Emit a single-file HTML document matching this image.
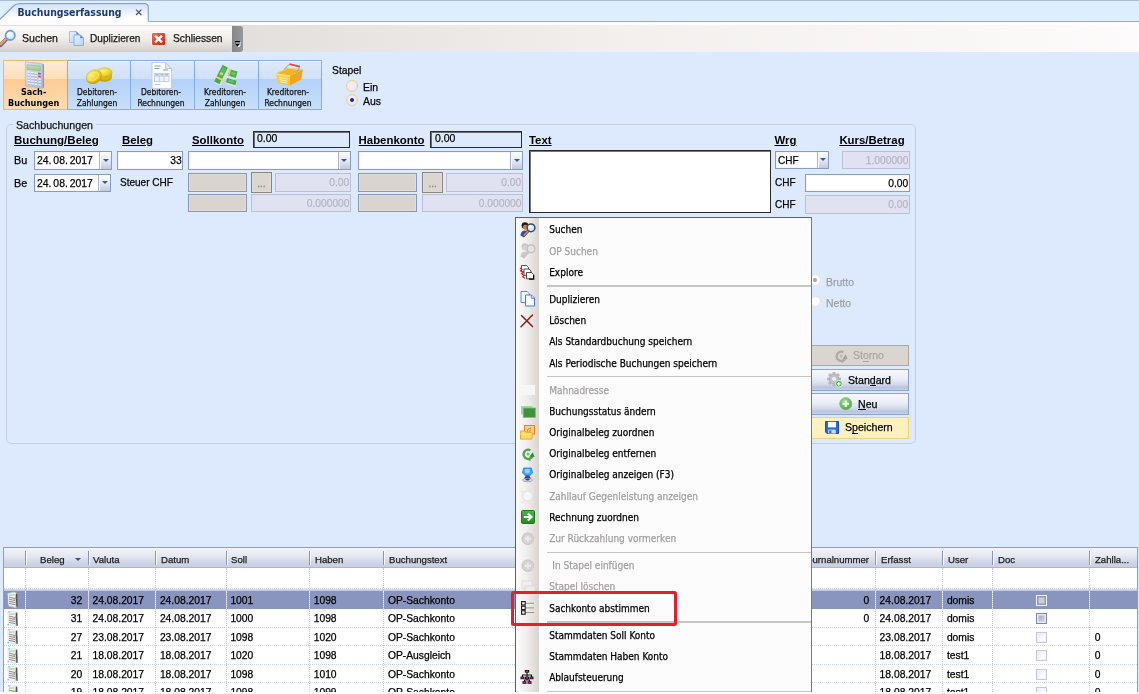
<!DOCTYPE html>
<html lang="de">
<head>
<meta charset="utf-8">
<title>Buchungserfassung</title>
<style>
html,body{margin:0;padding:0;overflow:hidden}
body{width:1139px;height:694px;overflow:hidden;position:relative;background:#ddeafe;font-family:"Liberation Sans",sans-serif;font-size:11px;color:#000}
#root{position:absolute;left:0;top:0;width:1139px;height:694px;will-change:transform}
.a{position:absolute;box-sizing:border-box;white-space:nowrap;-webkit-text-stroke:.25px}
svg.a{overflow:visible}
#tabstrip{left:0;top:0;width:1139px;height:22px;background:#ddeefe;border-top:1px solid #a9bdd8;border-bottom:1px solid #8eaad0}
#whiteline{left:0;top:22px;width:1139px;height:3px;background:#fdfdfe}
#tbrow{left:0;top:25px;width:1139px;height:27px;background:linear-gradient(90deg,#e3dfdc 240px,#f3f0ee 640px,#fdfbfb 1139px)}
#tb{left:0;top:26px;width:232px;height:26px;background:linear-gradient(#fbf9f8,#f3efed 45%,#e3dedb 75%,#d5cdc9);border-radius:0 0 3px 0}
#tbgrip{left:231.5px;top:26px;width:11.5px;height:26px;background:linear-gradient(90deg,#878787,#979797);border-radius:0 3px 3px 0}
.mb{top:60px;height:50px;border:1px solid #86acea;box-shadow:inset 0 1px 0 rgba(255,255,255,.65);background:linear-gradient(#dfeafb 0,#cfe0f9 37%,#b4d1f9 38%,#c9dffb 100%)}
.mb.sel{border-color:#f3b562;background:linear-gradient(#fdecd8 0,#fdddb6 37%,#fdcc93 38%,#fddcb1 100%)}
.in{background:#fff;border:1px solid #889bc2;box-shadow:inset 0 0 0 1px #f4f6fb}
.dis{background:#e0e1f1;border:1px solid #bbbfd3}
.gr{background:#d9d4cf;border:1px solid #8a98b8;box-shadow:inset 0 0 0 1px #e4dcd4}
.sunk{background:#ddeafe;border:1px solid #2b2b2b;box-shadow:inset 1px 1px 0 #6e6e6e}
.dd{background:linear-gradient(#fcfdff,#e3e7f3 55%,#c3c9dc);border-left:1px solid #aab6d0;box-shadow:inset 1px 0 0 #f6f8fc}
.dd:after{content:"";position:absolute;left:50%;top:50%;margin:-2px 0 0 -3px;border:3px solid transparent;border-top:3.5px solid #3b5690;border-bottom:0}
.btn{border:1px solid #89a3d6;background:linear-gradient(#f6f7fc 0,#eceff8 40%,#d6dced 70%,#b9c3db 88%,#c9d1e4 100%)}
.rad{width:12px;height:12px;border-radius:50%;border:1.3px solid #f0cb8c;background:radial-gradient(circle at 40% 40%,#f3f1f7,#e7e4ef)}
.rad.on:after{content:"";position:absolute;left:2.7px;top:2.7px;width:4.2px;height:4.2px;border-radius:50%;background:#19277c}
.radd{border-radius:50%;border:1.2px solid #e6dfd6;background:#fdfcfc}
.radd.on:after{content:"";position:absolute;left:2.4px;top:3px;width:4.4px;height:4.4px;border-radius:50%;background:#a3a3a6}
#menu{left:515.4px;top:217px;width:296.6px;height:490px;background:#fdfcfc;border:1px solid #5f5f5f;border-right-color:#7a7a7a}
#mstrip{left:515.8px;top:218px;width:23.5px;height:480px;background:linear-gradient(90deg,#fcfbfb 0,#f1efed 45%,#d8d4d0 100%)}
.msep{left:547px;width:264px;height:1.3px;background:#c6c4c3}
#grid{left:3px;top:547px;width:1135px;height:150px;background:#fff;border:1px solid #8e9ec0}
#gh{left:4px;top:548px;width:1133px;height:19.5px;background:linear-gradient(#f3f4fa 0,#e6e9f3 40%,#d0d6e7 75%,#c8cfe2 100%);border-bottom:1px solid #adb6cf}
.ghs{top:551px;width:1px;height:14px;background:#8a95b2;box-shadow:1px 0 0 #fbfbfd}
.grow{left:4px;width:1133px;height:1px;border-top:1px dotted #cdd1dc}
.gv{top:568px;width:0;height:130px;border-left:1px dotted #c5c9d6}
.gvs{width:0;height:18px;border-left:1px dotted #e6e9f2}
.cb{width:11px;height:11px}
</style>
</head>
<body>
<div id="root">
<!-- TAB STRIP -->
<div class="a" id="tabstrip"></div>
<svg class="a" style="left:0;top:0" width="160" height="23" viewBox="0 0 160 23">
<defs><linearGradient id="tg" x1="0" y1="0" x2="0" y2="1"><stop offset=".15" stop-color="#d9e6fa"/><stop offset=".75" stop-color="#ffffff"/></linearGradient></defs>
<path d="M-2 23 L-2 21.3 L13.2 6.2 Q15.8 3.6 20 3.6 L144.5 3.6 Q148.3 3.6 148.3 7.5 L148.3 23 Z" fill="url(#tg)"/>
<path d="M-2 21.3 L13.2 6.2 Q15.8 3.6 20 3.6 L144.5 3.6 Q148.3 3.6 148.3 7.5 L148.3 21.8" fill="none" stroke="#86a3cd" stroke-width="1.2"/>
<path d="M136 9.6 l5.4 5.4 m0 -5.4 l-5.4 5.4" stroke="#4c4c4c" stroke-width="1.1" fill="none"/>
</svg>
<div class="a" style="top:4.95px;line-height:14px;font-size:10.4px;font-family:'DejaVu Sans Condensed','Liberation Sans',sans-serif;color:#1b3a70;font-weight:bold;-webkit-text-stroke:0;left:17.5px;">Buchungserfassung</div>
<div class="a" id="whiteline"></div>
<!-- TOOLBAR -->
<div class="a" id="tbrow"></div><div class="a" id="tb"></div><div class="a" id="tbgrip"></div>
<svg class="a" style="left:-0.3px;top:29.8px" width="16" height="17" viewBox="0 0 16 17"><defs><radialGradient id="lens" cx=".4" cy=".35" r=".7"><stop offset="0" stop-color="#fff"/><stop offset=".6" stop-color="#d4f0fb"/><stop offset="1" stop-color="#a8d4f4"/></radialGradient></defs><path d="M6.4 9.0 L0.6 15.2" stroke="#5a6894" stroke-width="4" stroke-linecap="round"/><path d="M6.2 8.6 L0.8 14.2" stroke="#eda04a" stroke-width="2.4" stroke-linecap="round"/><circle cx="10.2" cy="5.4" r="4.7" fill="url(#lens)" stroke="#7797d6" stroke-width="1.7"/></svg>
<div class="a" style="top:30.90px;line-height:15px;font-size:11.4px;color:#151515;left:21.9px;transform:scaleX(0.93);transform-origin:0 0;">Suchen</div>
<svg class="a" style="left:68.5px;top:31px" width="15" height="15" viewBox="0 0 15 15"><defs><linearGradient id="tbg" x1="0" y1="0" x2="1" y2="1"><stop offset="0" stop-color="#eaf3fe"/><stop offset="1" stop-color="#b5d2f8"/></linearGradient></defs><path d="M.5 .5 H7.5 L10.5 3.5 V11.5 H.5 Z" fill="url(#tbg)" stroke="#9dc0f1" stroke-width="1"/><path d="M7.3 .5 L10.5 3.7 H7.3 Z" fill="#5f8de0"/><path d="M5 4 H11.5 L14.5 7 V14.5 H5 Z" fill="url(#tbg)" stroke="#86b0ee" stroke-width="1"/><path d="M11.3 4 L14.5 7.2 H11.3 Z" fill="#4f80dc"/></svg>
<div class="a" style="top:30.90px;line-height:15px;font-size:11.4px;color:#151515;left:90.4px;transform:scaleX(0.885);transform-origin:0 0;">Duplizieren</div>
<svg class="a" style="left:151px;top:31.5px" width="15" height="14" viewBox="0 0 15 14"><defs><linearGradient id="rx" x1="0" y1="0" x2="1" y2="1"><stop offset="0" stop-color="#f4694a"/><stop offset="1" stop-color="#d3230f"/></linearGradient></defs><rect x=".2" y=".2" width="14.6" height="13.6" rx="1.5" fill="#fff" opacity=".8"/><rect x="1" y="1" width="13" height="12" rx="1" fill="url(#rx)"/><path d="M4 3.6 L11 10.4 M11 3.6 L4 10.4" stroke="#fff" stroke-width="2.3" stroke-linecap="butt"/></svg>
<div class="a" style="top:30.90px;line-height:15px;font-size:11.4px;color:#151515;left:173px;transform:scaleX(0.9);transform-origin:0 0;">Schliessen</div>
<svg class="a" style="left:234.6px;top:41.3px" width="8" height="7" viewBox="0 0 8 7"><rect x="1" y="1.4" width="5" height="1" fill="#fff"/><rect x="0" y="0" width="5" height="1.3" fill="#000"/><path d="M1.2 3.6 H6.2 L3.7 6.6 Z" fill="#fff"/><path d="M0 2.8 H5 L2.5 5.6 Z" fill="#000"/></svg>
<!-- MODE BUTTONS -->
<div class="a mb sel" style="left:3px;top:60px;width:64.7px;height:50px;"></div>
<div class="a" style="top:85.84px;line-height:12px;font-size:9px;font-family:'DejaVu Sans Condensed','Liberation Sans',sans-serif;font-weight:bold;-webkit-text-stroke:0;left:-116.35px;width:300px;text-align:center;">Sach-</div>
<div class="a" style="top:96.84px;line-height:12px;font-size:9px;font-family:'DejaVu Sans Condensed','Liberation Sans',sans-serif;font-weight:bold;-webkit-text-stroke:0;left:-116.35px;width:300px;text-align:center;">Buchungen</div>
<div class="a mb" style="left:66.7px;top:60px;width:64.6px;height:50px;"></div>
<div class="a" style="top:85.84px;line-height:12px;font-size:9px;font-family:'DejaVu Sans Condensed','Liberation Sans',sans-serif;color:#111;left:-52.7px;width:300px;text-align:center;transform:scaleX(0.935);transform-origin:50% 0;">Debitoren-</div>
<div class="a" style="top:96.84px;line-height:12px;font-size:9px;font-family:'DejaVu Sans Condensed','Liberation Sans',sans-serif;color:#111;left:-52.7px;width:300px;text-align:center;transform:scaleX(0.935);transform-origin:50% 0;">Zahlungen</div>
<div class="a mb" style="left:130.3px;top:60px;width:64.7px;height:50px;"></div>
<div class="a" style="top:85.84px;line-height:12px;font-size:9px;font-family:'DejaVu Sans Condensed','Liberation Sans',sans-serif;color:#111;left:10.950000000000017px;width:300px;text-align:center;transform:scaleX(0.935);transform-origin:50% 0;">Debitoren-</div>
<div class="a" style="top:96.84px;line-height:12px;font-size:9px;font-family:'DejaVu Sans Condensed','Liberation Sans',sans-serif;color:#111;left:10.950000000000017px;width:300px;text-align:center;transform:scaleX(0.935);transform-origin:50% 0;">Rechnungen</div>
<div class="a mb" style="left:194px;top:60px;width:64.7px;height:50px;"></div>
<div class="a" style="top:85.84px;line-height:12px;font-size:9px;font-family:'DejaVu Sans Condensed','Liberation Sans',sans-serif;color:#111;left:74.65px;width:300px;text-align:center;transform:scaleX(0.935);transform-origin:50% 0;">Kreditoren-</div>
<div class="a" style="top:96.84px;line-height:12px;font-size:9px;font-family:'DejaVu Sans Condensed','Liberation Sans',sans-serif;color:#111;left:74.65px;width:300px;text-align:center;transform:scaleX(0.935);transform-origin:50% 0;">Zahlungen</div>
<div class="a mb" style="left:257.7px;top:60px;width:64.1px;height:50px;"></div>
<div class="a" style="top:85.84px;line-height:12px;font-size:9px;font-family:'DejaVu Sans Condensed','Liberation Sans',sans-serif;color:#111;left:138.05px;width:300px;text-align:center;transform:scaleX(0.935);transform-origin:50% 0;">Kreditoren-</div>
<div class="a" style="top:96.84px;line-height:12px;font-size:9px;font-family:'DejaVu Sans Condensed','Liberation Sans',sans-serif;color:#111;left:138.05px;width:300px;text-align:center;transform:scaleX(0.935);transform-origin:50% 0;">Rechnungen</div>
<svg class="a" style="left:24.8px;top:61px" width="20" height="28" viewBox="0 0 20 28"><defs><linearGradient id="cb" x1="0" y1="0" x2="1" y2="1"><stop offset="0" stop-color="#dbe4f1"/><stop offset="1" stop-color="#aebdd6"/></linearGradient><linearGradient id="cd" x1="0" y1="0" x2="0" y2="1"><stop offset="0" stop-color="#c3e2ab"/><stop offset="1" stop-color="#9fc886"/></linearGradient></defs><path d="M17.3 2.7 L19 3.5 V26.5 L17.3 27.4 Z" fill="#8798b6"/><path d="M0.3 0.7 L17.3 2.7 V27.4 L0.5 25 Z" fill="url(#cb)" stroke="#a9b8d0" stroke-width=".7"/><path d="M2 3.7 L15.3 5.2 V9.8 L2 8.5 Z" fill="url(#cd)" stroke="#8fae80" stroke-width=".5"/><path d="M2.60 10.50 l2.5 .3 v1.5 l-2.5 -.3 Z" fill="#f7f9fc"/><path d="M2.60 12.00 l2.5 .3" stroke="#8d9bb4" stroke-width=".6"/><path d="M6.15 10.92 l2.5 .3 v1.5 l-2.5 -.3 Z" fill="#f7f9fc"/><path d="M6.15 12.42 l2.5 .3" stroke="#8d9bb4" stroke-width=".6"/><path d="M9.70 11.34 l2.5 .3 v1.5 l-2.5 -.3 Z" fill="#f7f9fc"/><path d="M9.70 12.84 l2.5 .3" stroke="#8d9bb4" stroke-width=".6"/><path d="M13.25 11.76 l2.5 .3 v1.5 l-2.5 -.3 Z" fill="#5b6476"/><path d="M2.60 13.35 l2.5 .3 v1.5 l-2.5 -.3 Z" fill="#f7f9fc"/><path d="M2.60 14.85 l2.5 .3" stroke="#8d9bb4" stroke-width=".6"/><path d="M6.15 13.77 l2.5 .3 v1.5 l-2.5 -.3 Z" fill="#f7f9fc"/><path d="M6.15 15.27 l2.5 .3" stroke="#8d9bb4" stroke-width=".6"/><path d="M9.70 14.19 l2.5 .3 v1.5 l-2.5 -.3 Z" fill="#f7f9fc"/><path d="M9.70 15.69 l2.5 .3" stroke="#8d9bb4" stroke-width=".6"/><path d="M13.25 14.61 l2.5 .3 v1.5 l-2.5 -.3 Z" fill="#e2434c"/><path d="M2.60 16.20 l2.5 .3 v1.5 l-2.5 -.3 Z" fill="#f7f9fc"/><path d="M2.60 17.70 l2.5 .3" stroke="#8d9bb4" stroke-width=".6"/><path d="M6.15 16.62 l2.5 .3 v1.5 l-2.5 -.3 Z" fill="#f7f9fc"/><path d="M6.15 18.12 l2.5 .3" stroke="#8d9bb4" stroke-width=".6"/><path d="M9.70 17.04 l2.5 .3 v1.5 l-2.5 -.3 Z" fill="#f7f9fc"/><path d="M9.70 18.54 l2.5 .3" stroke="#8d9bb4" stroke-width=".6"/><path d="M13.25 17.46 l2.5 .3 v1.5 l-2.5 -.3 Z" fill="#f7f9fc"/><path d="M13.25 18.96 l2.5 .3" stroke="#8d9bb4" stroke-width=".6"/><path d="M2.60 19.05 l2.5 .3 v1.5 l-2.5 -.3 Z" fill="#f7f9fc"/><path d="M2.60 20.55 l2.5 .3" stroke="#8d9bb4" stroke-width=".6"/><path d="M6.15 19.47 l2.5 .3 v1.5 l-2.5 -.3 Z" fill="#f7f9fc"/><path d="M6.15 20.97 l2.5 .3" stroke="#8d9bb4" stroke-width=".6"/><path d="M9.70 19.89 l2.5 .3 v1.5 l-2.5 -.3 Z" fill="#f7f9fc"/><path d="M9.70 21.39 l2.5 .3" stroke="#8d9bb4" stroke-width=".6"/><path d="M13.25 20.31 l2.5 .3 v1.5 l-2.5 -.3 Z" fill="#f7f9fc"/><path d="M13.25 21.81 l2.5 .3" stroke="#8d9bb4" stroke-width=".6"/><path d="M2.60 21.90 l2.5 .3 v1.5 l-2.5 -.3 Z" fill="#f7f9fc"/><path d="M2.60 23.40 l2.5 .3" stroke="#8d9bb4" stroke-width=".6"/><path d="M6.15 22.32 l2.5 .3 v1.5 l-2.5 -.3 Z" fill="#f7f9fc"/><path d="M6.15 23.82 l2.5 .3" stroke="#8d9bb4" stroke-width=".6"/><path d="M9.70 22.74 l2.5 .3 v1.5 l-2.5 -.3 Z" fill="#f7f9fc"/><path d="M9.70 24.24 l2.5 .3" stroke="#8d9bb4" stroke-width=".6"/><path d="M13.25 23.16 l2.5 .3 v1.5 l-2.5 -.3 Z" fill="#f7f9fc"/><path d="M13.25 24.66 l2.5 .3" stroke="#8d9bb4" stroke-width=".6"/></svg>
<svg class="a" style="left:85.5px;top:66.5px" width="27" height="17" viewBox="0 0 27 17"><defs><radialGradient id="cg" cx=".4" cy=".3" r=".8"><stop offset="0" stop-color="#fbf08a"/><stop offset=".6" stop-color="#efd127"/><stop offset="1" stop-color="#c9a508"/></radialGradient></defs><ellipse cx="18.5" cy="10" rx="7.6" ry="4.8" fill="#caa70a"/><ellipse cx="18.5" cy="8" rx="7.6" ry="4.8" fill="#d9b615"/><ellipse cx="18.5" cy="5.6" rx="7.6" ry="4.8" fill="url(#cg)" stroke="#d2b010" stroke-width=".5"/><ellipse cx="8" cy="10.6" rx="8" ry="6" fill="#c9a508" transform="rotate(-28 8 10.6)"/><ellipse cx="7.7" cy="9.3" rx="8" ry="6" fill="url(#cg)" stroke="#d2b010" stroke-width=".5" transform="rotate(-28 7.7 9.3)"/><ellipse cx="7.7" cy="9.3" rx="5.2" ry="3.6" fill="none" stroke="#f9ec7a" stroke-width=".8" transform="rotate(-28 7.7 9.3)"/></svg>
<svg class="a" style="left:150.7px;top:61.5px" width="21" height="27" viewBox="0 0 21 27"><path d="M1 .5 H14.5 L20.5 6.5 V26.5 H1 Z" fill="#fbfcfe" stroke="#c3cddd" stroke-width="1"/><path d="M14.5 .5 V6.5 H20.5 Z" fill="#dfe5ee" stroke="#b9c3d3" stroke-width=".8"/><path d="M3.5 4 h6 M3.5 6.5 h5 M12 8 h5" stroke="#8d9ab0" stroke-width="1"/><rect x="3.5" y="11.5" width="14.5" height="8" fill="#eef4fc" stroke="#b6c8e4" stroke-width=".8"/><path d="M3.5 14.2 h14.5 M8.3 11.5 v8 M13 11.5 v8" stroke="#b6c8e4" stroke-width=".8"/><path d="M4.5 12.8 h3 M9.3 12.8 h3 M14 12.8 h3" stroke="#7e93b8" stroke-width=".9"/><path d="M3.5 22.5 h6" stroke="#c4cddb" stroke-width="1"/></svg>
<svg class="a" style="left:213px;top:63px" width="26" height="24" viewBox="0 0 26 24"><g transform="translate(19.9 11.2) rotate(17)"><rect x="-4.6" y="-3.9" width="9.2" height="7.8" fill="#e3e3e3"/><rect x="-4.6" y="-3.9" width="8.4" height="6.6" fill="#4cae55"/><rect x="-4.6" y="-3.9" width="1.6" height="6.6" fill="#e9cf55"/><rect x="-1.8" y="-2" width="4" height="2.6" fill="#6cc172"/></g><g transform="translate(18.3 19.2) rotate(17)"><rect x="-5.2" y="-2.9" width="10.6" height="6.4" fill="#e1e1e1"/><rect x="-5.2" y="-2.9" width="10" height="4.6" fill="#49aa52"/><rect x="-3" y="-1.8" width="5" height="2" fill="#6abf70"/></g><g transform="translate(8.2 11.9) rotate(27.5)"><rect x="-3.6" y="-9.8" width="8.4" height="19.9" fill="#dcdcdc"/><rect x="-3.6" y="-9.8" width="6.6" height="19.2" fill="#47a951" stroke="#e9f3e9" stroke-width=".5"/><rect x="-2.2" y="-7.8" width="3.8" height="9.2" fill="#5fb966"/><ellipse cx="-.3" cy="-1.2" rx="1.7" ry="1.3" fill="#c7e06a"/><rect x="-3.8" y="3" width="8.6" height="1.9" fill="#ecd45c"/></g></svg>
<svg class="a" style="left:275px;top:63px" width="29" height="23" viewBox="0 0 29 23"><defs><linearGradient id="bk" x1="0" y1="0" x2="0" y2="1"><stop offset="0" stop-color="#fbd44a"/><stop offset="1" stop-color="#f6bf2a"/></linearGradient></defs><path d="M.8 10.7 L12.6 5.3 L27.8 6.8 L15 13.1 Z" fill="#f3b22a" stroke="#f9cf4e" stroke-width="1"/><path d="M15 13.1 L27.8 6.8 L26.3 16.6 L14.6 22.5 Z" fill="#efa51c"/><path d="M.8 10.7 L15 13.1 L14.6 22.5 L3.3 20 Z" fill="url(#bk)"/><path d="M.8 10.9 L15 13.3" stroke="#fde27e" stroke-width="1.5"/><path d="M4 14.4 L12.4 16 M4.4 16.6 L12.4 18.2 M4.8 18.6 L12.4 20.2" stroke="#fde9a0" stroke-width="1.1"/><path d="M9.2 6.3 L14.6 1.1 M24.9 3.6 L21.4 9.9" fill="none" stroke="#a9adb8" stroke-width="1.1"/><path d="M14.6 1.1 L24.9 3.6" stroke="#e1454d" stroke-width="1.7"/></svg>
<div class="a" style="top:62.70px;line-height:15px;font-size:11.4px;left:332.1px;transform:scaleX(0.905);transform-origin:0 0;">Stapel</div>
<div class="a rad" style="left:346px;top:79.6px;width:12px;height:12px;"></div>
<div class="a" style="top:80.20px;line-height:15px;font-size:11.4px;left:363px;transform:scaleX(0.92);transform-origin:0 0;">Ein</div>
<div class="a rad on" style="left:346px;top:94.3px;width:12px;height:12px;"></div>
<div class="a" style="top:94.20px;line-height:15px;font-size:11.4px;left:362.5px;transform:scaleX(0.92);transform-origin:0 0;">Aus</div>
<!-- FORM -->
<div class="a" style="left:6px;top:124px;width:910.4px;height:319.6px;border:1px solid #c3ccdb;border-radius:5px"></div>
<div class="a" style="left:13px;top:119px;width:83px;height:12px;background:#ddeafe"></div>
<div class="a" style="top:117.60px;line-height:15px;font-size:11.4px;color:#111;left:16px;transform:scaleX(0.935);transform-origin:0 0;">Sachbuchungen</div>
<div class="a" style="top:132.90px;line-height:15px;font-size:11.4px;font-weight:bold;-webkit-text-stroke:0;text-decoration:underline;left:14.3px;transform:scaleX(1.015);transform-origin:0 0;">Buchung/Beleg</div>
<div class="a" style="top:132.90px;line-height:15px;font-size:11.4px;font-weight:bold;-webkit-text-stroke:0;text-decoration:underline;left:122px;">Beleg</div>
<div class="a" style="top:132.90px;line-height:15px;font-size:11.4px;font-weight:bold;-webkit-text-stroke:0;text-decoration:underline;left:192px;">Sollkonto</div>
<div class="a" style="top:132.90px;line-height:15px;font-size:11.4px;font-weight:bold;-webkit-text-stroke:0;text-decoration:underline;left:358.6px;">Habenkonto</div>
<div class="a" style="top:132.90px;line-height:15px;font-size:11.4px;font-weight:bold;-webkit-text-stroke:0;text-decoration:underline;left:529px;">Text</div>
<div class="a" style="top:132.90px;line-height:15px;font-size:11.4px;font-weight:bold;-webkit-text-stroke:0;text-decoration:underline;left:774.5px;">Wrg</div>
<div class="a" style="top:132.90px;line-height:15px;font-size:11.4px;font-weight:bold;-webkit-text-stroke:0;text-decoration:underline;left:839.4px;">Kurs/Betrag</div>
<div class="a sunk" style="left:252.7px;top:131px;width:97.3px;height:17.4px;"></div>
<div class="a" style="top:130.80px;line-height:15px;font-size:11.4px;left:257.2px;transform:scaleX(0.92);transform-origin:0 0;">0.00</div>
<div class="a sunk" style="left:430.3px;top:131px;width:92.1px;height:17.4px;"></div>
<div class="a" style="top:130.80px;line-height:15px;font-size:11.4px;left:434.8px;transform:scaleX(0.92);transform-origin:0 0;">0.00</div>
<div class="a" style="top:153.40px;line-height:15px;font-size:11.4px;left:14px;transform:scaleX(0.95);transform-origin:0 0;">Bu</div>
<div class="a" style="top:175.50px;line-height:15px;font-size:11.4px;left:14px;transform:scaleX(0.95);transform-origin:0 0;">Be</div>
<div class="a in" style="left:34px;top:151.3px;width:78px;height:19.2px;"></div><div class="a dd" style="left:99px;top:152.3px;width:12px;height:17.2px;"></div><div class="a" style="top:153.40px;line-height:15px;font-size:11.4px;left:36.8px;transform:scaleX(0.913);transform-origin:0 0;word-spacing:-1.1px;">24. 08. 2017</div>
<div class="a in" style="left:34px;top:174px;width:77px;height:18.4px;"></div><div class="a dd" style="left:98px;top:175px;width:12px;height:16.4px;"></div><div class="a" style="top:175.50px;line-height:15px;font-size:11.4px;left:36.8px;transform:scaleX(0.913);transform-origin:0 0;word-spacing:-1.1px;">24. 08. 2017</div>
<div class="a in" style="left:116.8px;top:151.3px;width:66.2px;height:19.2px;"></div>
<div class="a" style="top:153.40px;line-height:15px;font-size:11.4px;right:957.5px;transform:scaleX(0.9);transform-origin:100% 0;">33</div>
<div class="a" style="top:174.90px;line-height:15px;font-size:11.4px;left:120px;transform:scaleX(0.88);transform-origin:0 0;">Steuer CHF</div>
<div class="a in" style="left:188px;top:151.3px;width:163px;height:19.2px;"></div><div class="a dd" style="left:337.5px;top:152.3px;width:12.5px;height:17.2px;"></div>
<div class="a in" style="left:358.3px;top:151.3px;width:165px;height:19.2px;"></div><div class="a dd" style="left:509.79999999999995px;top:152.3px;width:12.5px;height:17.2px;"></div>
<div class="a gr" style="left:188.1px;top:173px;width:58.6px;height:18.6px;"></div><div class="a gr" style="left:251px;top:172.2px;width:21px;height:20.6px;border-color:#8b847d;background:#dcd6d0"></div><div class="a" style="top:177.09px;line-height:13px;font-size:10px;color:#8d8984;left:111.30000000000001px;width:300px;text-align:center;">...</div><div class="a dis" style="left:274.8px;top:173.2px;width:76px;height:18.4px;"></div><div class="a" style="top:174.60px;line-height:15px;font-size:11.4px;color:#b3b6c4;right:789.7px;transform:scaleX(0.9);transform-origin:100% 0;">0.00</div><div class="a gr" style="left:188.1px;top:194.1px;width:58.6px;height:18.3px;"></div><div class="a dis" style="left:251px;top:194.2px;width:99.8px;height:18.2px;"></div><div class="a" style="top:195.90px;line-height:15px;font-size:11.4px;color:#b3b6c4;right:789.7px;transform:scaleX(0.9);transform-origin:100% 0;">0.000000</div>
<div class="a gr" style="left:358.2px;top:173px;width:58.6px;height:18.6px;"></div><div class="a gr" style="left:422.4px;top:172.2px;width:21px;height:20.6px;border-color:#8b847d;background:#dcd6d0"></div><div class="a" style="top:177.09px;line-height:13px;font-size:10px;color:#8d8984;left:282.7px;width:300px;text-align:center;">...</div><div class="a dis" style="left:446.2px;top:173.2px;width:76.4px;height:18.4px;"></div><div class="a" style="top:174.60px;line-height:15px;font-size:11.4px;color:#b3b6c4;right:617.9px;transform:scaleX(0.9);transform-origin:100% 0;">0.00</div><div class="a gr" style="left:358.2px;top:194.1px;width:58.6px;height:18.3px;"></div><div class="a dis" style="left:422.4px;top:194.2px;width:100.2px;height:18.2px;"></div><div class="a" style="top:195.90px;line-height:15px;font-size:11.4px;color:#b3b6c4;right:617.9px;transform:scaleX(0.9);transform-origin:100% 0;">0.000000</div>
<div class="a" style="left:528.6px;top:150.3px;width:242.4px;height:63px;background:#fff;border:1px solid #2a2a2a;box-shadow:inset 1px 1px 0 #777"></div>
<div class="a in" style="left:774.5px;top:150.6px;width:54.5px;height:18.8px;"></div><div class="a dd" style="left:816.5px;top:151.6px;width:11.5px;height:16.8px;"></div>
<div class="a" style="top:152.50px;line-height:15px;font-size:11.4px;left:778px;transform:scaleX(0.88);transform-origin:0 0;">CHF</div>
<div class="a dis" style="left:842px;top:150.6px;width:68.3px;height:18.8px;"></div>
<div class="a" style="top:152.50px;line-height:15px;font-size:11.4px;color:#b3b6c4;right:230.5px;transform:scaleX(0.9);transform-origin:100% 0;">1.000000</div>
<div class="a" style="top:175.30px;line-height:15px;font-size:11.4px;left:775px;transform:scaleX(0.88);transform-origin:0 0;">CHF</div>
<div class="a in" style="left:805.3px;top:174.3px;width:105px;height:18.2px;"></div>
<div class="a" style="top:175.50px;line-height:15px;font-size:11.4px;right:230.5px;transform:scaleX(0.9);transform-origin:100% 0;">0.00</div>
<div class="a" style="top:196.60px;line-height:15px;font-size:11.4px;left:775px;transform:scaleX(0.88);transform-origin:0 0;">CHF</div>
<div class="a dis" style="left:805.3px;top:195.4px;width:105px;height:18.6px;"></div>
<div class="a" style="top:196.60px;line-height:15px;font-size:11.4px;color:#b3b6c4;right:230.5px;transform:scaleX(0.9);transform-origin:100% 0;">0.00</div>
<div class="a radd on" style="left:809.5px;top:274px;width:11.5px;height:11.5px;"></div>
<div class="a" style="top:274.70px;line-height:15px;font-size:11.4px;color:#9c9eaa;left:826px;transform:scaleX(0.92);transform-origin:0 0;">Brutto</div>
<div class="a radd" style="left:809.5px;top:295.5px;width:11.5px;height:11.5px;"></div>
<div class="a" style="top:295.70px;line-height:15px;font-size:11.4px;color:#9c9eaa;left:826px;transform:scaleX(0.92);transform-origin:0 0;">Netto</div>
<div class="a btn" style="left:805.5px;top:344.6px;width:103.8px;height:21.6px;background:#dad6cf;border-color:#aca8a0"></div>
<svg class="a" style="left:834.3px;top:349px" width="14" height="14" viewBox="0 0 14 14"><path d="M11.2 9.6 A4.6 4.6 0 1 1 9.4 3.2" fill="none" stroke="#aeaba6" stroke-width="2.4"/><path d="M11.8 5.2 L13.6 10 L8.4 9.8 Z" fill="#a5a29d"/><path d="M5.2 12.4 L9.2 10.6 L9.6 14 Z" fill="#aeaba6"/><circle cx="7" cy="7" r="1.5" fill="#aeaba6" opacity=".7"/></svg>
<div class="a" style="top:348.40px;line-height:15px;font-size:11.4px;color:#a9a6a1;left:853.4px;transform:scaleX(0.92);transform-origin:0 0;">Storno</div>
<div class="a btn" style="left:805.5px;top:368.8px;width:103.8px;height:21.9px;"></div>
<svg class="a" style="left:827.3px;top:371.5px" width="16" height="16" viewBox="0 0 16 16"><rect x="-1.5" y="-7" width="3" height="3.2" fill="#b9b9b9" transform="translate(7 7) rotate(0)"/><rect x="-1.5" y="-7" width="3" height="3.2" fill="#b9b9b9" transform="translate(7 7) rotate(45)"/><rect x="-1.5" y="-7" width="3" height="3.2" fill="#b9b9b9" transform="translate(7 7) rotate(90)"/><rect x="-1.5" y="-7" width="3" height="3.2" fill="#b9b9b9" transform="translate(7 7) rotate(135)"/><rect x="-1.5" y="-7" width="3" height="3.2" fill="#b9b9b9" transform="translate(7 7) rotate(180)"/><rect x="-1.5" y="-7" width="3" height="3.2" fill="#b9b9b9" transform="translate(7 7) rotate(225)"/><rect x="-1.5" y="-7" width="3" height="3.2" fill="#b9b9b9" transform="translate(7 7) rotate(270)"/><rect x="-1.5" y="-7" width="3" height="3.2" fill="#b9b9b9" transform="translate(7 7) rotate(315)"/><circle cx="7" cy="7" r="4.8" fill="#c4c4c4" stroke="#a9a9a9" stroke-width=".8"/><circle cx="7" cy="7" r="2" fill="#eef0f6"/><circle cx="11.8" cy="11.8" r="3.3" fill="#3fb140" stroke="#e9f6e9" stroke-width=".8"/><path d="M11.8 9.9 V13.7 M9.9 11.8 H13.7" stroke="#fff" stroke-width="1.2"/></svg>
<div class="a" style="top:372.60px;line-height:15px;font-size:11.4px;left:848px;transform:scaleX(0.93);transform-origin:0 0;">Standard</div>
<div class="a btn" style="left:805.5px;top:393.2px;width:103.8px;height:21.5px;"></div>
<svg class="a" style="left:839.2px;top:396.7px" width="13.5" height="13.5" viewBox="0 0 14 14"><defs><radialGradient id="pg" cx=".4" cy=".3" r=".8"><stop offset="0" stop-color="#9fe08f"/><stop offset="1" stop-color="#3aa63a"/></radialGradient></defs><circle cx="7" cy="7" r="6.2" fill="url(#pg)" stroke="#6cc064" stroke-width="1"/><path d="M7 3.6 V10.4 M3.6 7 H10.4" stroke="#fff" stroke-width="2.2"/></svg>
<div class="a" style="top:396.50px;line-height:15px;font-size:11.4px;left:858.3px;transform:scaleX(0.93);transform-origin:0 0;">Neu</div>
<div class="a btn" style="left:805.5px;top:417.3px;width:103.8px;height:21.5px;background:#fdf2bf;border-color:#f1d276"></div>
<svg class="a" style="left:825.4px;top:421px" width="14" height="13" viewBox="0 0 14 13"><path d="M.5 .5 H13.5 V12.5 H2 L.5 11 Z" fill="#2a67d8" stroke="#1a4eb8" stroke-width="1"/><rect x="3" y="0.8" width="8" height="5.6" fill="#f4f7fd"/><rect x="3.2" y="8.6" width="7.6" height="4" fill="#cfd9ee"/><rect x="4.2" y="9.4" width="2.2" height="3" fill="#2a67d8"/></svg>
<div class="a" style="top:420.20px;line-height:15px;font-size:11.4px;left:845px;transform:scaleX(0.93);transform-origin:0 0;">Speichern</div>
<div class="a" style="left:863.3px;top:360.8px;width:5.8px;height:1px;background:#a9a6a1"></div>
<div class="a" style="left:869.8px;top:385.0px;width:5.9px;height:1px;background:#000"></div>
<div class="a" style="left:858.3px;top:408.9px;width:7.6px;height:1px;background:#000"></div>
<div class="a" style="left:852.1px;top:432.6px;width:5.9px;height:1px;background:#000"></div>
<!-- GRID -->
<div class="a" id="grid"></div><div class="a" id="gh"></div>
<div class="a ghs" style="left:25.0px"></div>
<div class="a ghs" style="left:87.6px"></div>
<div class="a ghs" style="left:155.0px"></div>
<div class="a ghs" style="left:225.5px"></div>
<div class="a ghs" style="left:308.8px"></div>
<div class="a ghs" style="left:383.0px"></div>
<div class="a ghs" style="left:759.5px"></div>
<div class="a ghs" style="left:874.7px"></div>
<div class="a ghs" style="left:942.0px"></div>
<div class="a ghs" style="left:992.0px"></div>
<div class="a ghs" style="left:1088.8px"></div>
<div class="a" style="top:552.55px;line-height:13px;font-size:9.8px;color:#1a1a1a;left:39.8px;transform:scaleX(0.98);transform-origin:0 0;">Beleg</div>
<div class="a" style="left:75.2px;top:558px;border:3.3px solid transparent;border-top:3.6px solid #3d4f82;border-bottom:0"></div>
<div class="a" style="top:552.55px;line-height:13px;font-size:9.8px;color:#1a1a1a;left:93.39999999999999px;transform:scaleX(0.98);transform-origin:0 0;">Valuta</div>
<div class="a" style="top:552.55px;line-height:13px;font-size:9.8px;color:#1a1a1a;left:160.8px;transform:scaleX(0.98);transform-origin:0 0;">Datum</div>
<div class="a" style="top:552.55px;line-height:13px;font-size:9.8px;color:#1a1a1a;left:231.3px;transform:scaleX(0.98);transform-origin:0 0;">Soll</div>
<div class="a" style="top:552.55px;line-height:13px;font-size:9.8px;color:#1a1a1a;left:314.6px;transform:scaleX(0.98);transform-origin:0 0;">Haben</div>
<div class="a" style="top:552.55px;line-height:13px;font-size:9.8px;color:#1a1a1a;left:388.8px;transform:scaleX(0.98);transform-origin:0 0;">Buchungstext</div>
<div class="a" style="top:552.55px;line-height:13px;font-size:9.8px;color:#1a1a1a;right:270.0px;transform:scaleX(0.98);transform-origin:100% 0;">Journalnummer</div>
<div class="a" style="top:552.55px;line-height:13px;font-size:9.8px;color:#1a1a1a;left:880.5px;transform:scaleX(0.98);transform-origin:0 0;">Erfasst</div>
<div class="a" style="top:552.55px;line-height:13px;font-size:9.8px;color:#1a1a1a;left:947.8px;transform:scaleX(0.98);transform-origin:0 0;">User</div>
<div class="a" style="top:552.55px;line-height:13px;font-size:9.8px;color:#1a1a1a;left:997.8px;transform:scaleX(0.98);transform-origin:0 0;">Doc</div>
<div class="a" style="top:552.55px;line-height:13px;font-size:9.8px;color:#1a1a1a;left:1094.6px;transform:scaleX(0.98);transform-origin:0 0;">Zahlla...</div>
<div class="a grow" style="top:587.6px"></div>
<div class="a" style="left:4px;top:588.6px;width:1133px;height:2px;background:linear-gradient(#dfe3ef,#b9c1d9)"></div>
<div class="a" style="left:4px;top:590.6px;width:1133px;height:18px;background:#8995bf"></div>
<svg class="a" style="left:7.4px;top:592.2px" width="12" height="16" viewBox="0 0 12 16"><path d="M.8 1.2 L7.6 .2 L9.6 1.4 L10 14.6 L8.4 15.6 L1.4 13.8 Z" fill="#f3f3f3" stroke="#d2d2d2" stroke-width=".5"/><path d="M2 2.6 L7.6 2 L7.7 3.6 L2.1 4.2 Z" fill="#b3dfa8"/><path d="M2 5.20 L8 6.50" stroke="#878787" stroke-width=".95"/><path d="M2 7.25 L8 8.55" stroke="#878787" stroke-width=".95"/><path d="M2 9.30 L8 10.60" stroke="#878787" stroke-width=".95"/><path d="M2 11.35 L8 12.65" stroke="#878787" stroke-width=".95"/><path d="M9.5 1.6 L10 14.8" stroke="#4c4c4c" stroke-width="1.5"/><path d="M8.3 3 L8.7 14.6" stroke="#bdbdbd" stroke-width=".8"/><rect x="8" y="5.2" width="1.3" height="1.5" fill="#38c6d6"/><rect x="6.6" y="6.6" width="1.2" height="1.2" fill="#ec7b7b"/><rect x="1.2" y=".4" width="2" height=".9" fill="#49c9d6"/><rect x=".4" y="13.2" width="1.6" height="1.1" fill="#49c9d6"/></svg>
<div class="a" style="top:593.88px;line-height:13px;font-size:10.3px;right:1056.7px;">32</div>
<div class="a" style="top:593.88px;line-height:13px;font-size:10.3px;left:92.5px;">24.08.2017</div>
<div class="a" style="top:593.88px;line-height:13px;font-size:10.3px;left:159.9px;">24.08.2017</div>
<div class="a" style="top:593.88px;line-height:13px;font-size:10.3px;left:230.4px;">1001</div>
<div class="a" style="top:593.88px;line-height:13px;font-size:10.3px;left:313.7px;">1098</div>
<div class="a" style="top:593.88px;line-height:13px;font-size:10.3px;left:387.9px;">OP-Sachkonto</div>
<div class="a" style="top:593.88px;line-height:13px;font-size:10.3px;right:269.79999999999995px;">0</div>
<div class="a" style="top:593.88px;line-height:13px;font-size:10.3px;left:879.6px;">24.08.2017</div>
<div class="a" style="top:593.88px;line-height:13px;font-size:10.3px;left:946.9px;">domis</div>
<div class="a" style="left:1035.7px;top:594.5px;width:11px;height:11px;border:1px solid #f2f3f8;background:#c9cddd;box-shadow:inset 0 0 0 1.5px #8d98bd"></div>
<div class="a grow" style="top:626.60px"></div>
<svg class="a" style="left:7.4px;top:610.7px" width="12" height="16" viewBox="0 0 12 16"><path d="M.8 1.2 L7.6 .2 L9.6 1.4 L10 14.6 L8.4 15.6 L1.4 13.8 Z" fill="#f3f3f3" stroke="#d2d2d2" stroke-width=".5"/><path d="M2 2.6 L7.6 2 L7.7 3.6 L2.1 4.2 Z" fill="#b3dfa8"/><path d="M2 5.20 L8 6.50" stroke="#878787" stroke-width=".95"/><path d="M2 7.25 L8 8.55" stroke="#878787" stroke-width=".95"/><path d="M2 9.30 L8 10.60" stroke="#878787" stroke-width=".95"/><path d="M2 11.35 L8 12.65" stroke="#878787" stroke-width=".95"/><path d="M9.5 1.6 L10 14.8" stroke="#4c4c4c" stroke-width="1.5"/><path d="M8.3 3 L8.7 14.6" stroke="#bdbdbd" stroke-width=".8"/><rect x="8" y="5.2" width="1.3" height="1.5" fill="#38c6d6"/><rect x="6.6" y="6.6" width="1.2" height="1.2" fill="#ec7b7b"/><rect x="1.2" y=".4" width="2" height=".9" fill="#49c9d6"/><rect x=".4" y="13.2" width="1.6" height="1.1" fill="#49c9d6"/></svg>
<div class="a" style="top:612.33px;line-height:13px;font-size:10.3px;right:1056.7px;">31</div>
<div class="a" style="top:612.33px;line-height:13px;font-size:10.3px;left:92.5px;">24.08.2017</div>
<div class="a" style="top:612.33px;line-height:13px;font-size:10.3px;left:159.9px;">24.08.2017</div>
<div class="a" style="top:612.33px;line-height:13px;font-size:10.3px;left:230.4px;">1000</div>
<div class="a" style="top:612.33px;line-height:13px;font-size:10.3px;left:313.7px;">1098</div>
<div class="a" style="top:612.33px;line-height:13px;font-size:10.3px;left:387.9px;">OP-Sachkonto</div>
<div class="a" style="top:612.33px;line-height:13px;font-size:10.3px;right:269.79999999999995px;">0</div>
<div class="a" style="top:612.33px;line-height:13px;font-size:10.3px;left:879.6px;">24.08.2017</div>
<div class="a" style="top:612.33px;line-height:13px;font-size:10.3px;left:946.9px;">domis</div>
<div class="a" style="left:1035.7px;top:613.0px;width:11px;height:11px;border:1px solid #8189aa;background:linear-gradient(135deg,#a3abc6,#cdd2e2);box-shadow:inset 0 0 0 1.5px #e8eaf2"></div>
<div class="a grow" style="top:645.10px"></div>
<svg class="a" style="left:7.4px;top:629.2px" width="12" height="16" viewBox="0 0 12 16"><path d="M.8 1.2 L7.6 .2 L9.6 1.4 L10 14.6 L8.4 15.6 L1.4 13.8 Z" fill="#f3f3f3" stroke="#d2d2d2" stroke-width=".5"/><path d="M2 2.6 L7.6 2 L7.7 3.6 L2.1 4.2 Z" fill="#b3dfa8"/><path d="M2 5.20 L8 6.50" stroke="#878787" stroke-width=".95"/><path d="M2 7.25 L8 8.55" stroke="#878787" stroke-width=".95"/><path d="M2 9.30 L8 10.60" stroke="#878787" stroke-width=".95"/><path d="M2 11.35 L8 12.65" stroke="#878787" stroke-width=".95"/><path d="M9.5 1.6 L10 14.8" stroke="#4c4c4c" stroke-width="1.5"/><path d="M8.3 3 L8.7 14.6" stroke="#bdbdbd" stroke-width=".8"/><rect x="8" y="5.2" width="1.3" height="1.5" fill="#38c6d6"/><rect x="6.6" y="6.6" width="1.2" height="1.2" fill="#ec7b7b"/><rect x="1.2" y=".4" width="2" height=".9" fill="#49c9d6"/><rect x=".4" y="13.2" width="1.6" height="1.1" fill="#49c9d6"/></svg>
<div class="a" style="top:630.78px;line-height:13px;font-size:10.3px;right:1056.7px;">27</div>
<div class="a" style="top:630.78px;line-height:13px;font-size:10.3px;left:92.5px;">23.08.2017</div>
<div class="a" style="top:630.78px;line-height:13px;font-size:10.3px;left:159.9px;">23.08.2017</div>
<div class="a" style="top:630.78px;line-height:13px;font-size:10.3px;left:230.4px;">1098</div>
<div class="a" style="top:630.78px;line-height:13px;font-size:10.3px;left:313.7px;">1020</div>
<div class="a" style="top:630.78px;line-height:13px;font-size:10.3px;left:387.9px;">OP-Sachkonto</div>
<div class="a" style="top:630.78px;line-height:13px;font-size:10.3px;left:879.6px;">23.08.2017</div>
<div class="a" style="top:630.78px;line-height:13px;font-size:10.3px;left:946.9px;">domis</div>
<div class="a" style="left:1035.7px;top:631.5px;width:11px;height:11px;border:1px solid #c3c8da;background:linear-gradient(135deg,#e3e6f0,#fff 70%);box-shadow:inset 0 0 0 1px #f1f2f7"></div>
<div class="a" style="top:630.78px;line-height:13px;font-size:10.3px;left:1094.8px;">0</div>
<div class="a grow" style="top:663.60px"></div>
<svg class="a" style="left:7.4px;top:647.7px" width="12" height="16" viewBox="0 0 12 16"><path d="M.8 1.2 L7.6 .2 L9.6 1.4 L10 14.6 L8.4 15.6 L1.4 13.8 Z" fill="#f3f3f3" stroke="#d2d2d2" stroke-width=".5"/><path d="M2 2.6 L7.6 2 L7.7 3.6 L2.1 4.2 Z" fill="#b3dfa8"/><path d="M2 5.20 L8 6.50" stroke="#878787" stroke-width=".95"/><path d="M2 7.25 L8 8.55" stroke="#878787" stroke-width=".95"/><path d="M2 9.30 L8 10.60" stroke="#878787" stroke-width=".95"/><path d="M2 11.35 L8 12.65" stroke="#878787" stroke-width=".95"/><path d="M9.5 1.6 L10 14.8" stroke="#4c4c4c" stroke-width="1.5"/><path d="M8.3 3 L8.7 14.6" stroke="#bdbdbd" stroke-width=".8"/><rect x="8" y="5.2" width="1.3" height="1.5" fill="#38c6d6"/><rect x="6.6" y="6.6" width="1.2" height="1.2" fill="#ec7b7b"/><rect x="1.2" y=".4" width="2" height=".9" fill="#49c9d6"/><rect x=".4" y="13.2" width="1.6" height="1.1" fill="#49c9d6"/></svg>
<div class="a" style="top:649.23px;line-height:13px;font-size:10.3px;right:1056.7px;">21</div>
<div class="a" style="top:649.23px;line-height:13px;font-size:10.3px;left:92.5px;">18.08.2017</div>
<div class="a" style="top:649.23px;line-height:13px;font-size:10.3px;left:159.9px;">18.08.2017</div>
<div class="a" style="top:649.23px;line-height:13px;font-size:10.3px;left:230.4px;">1020</div>
<div class="a" style="top:649.23px;line-height:13px;font-size:10.3px;left:313.7px;">1098</div>
<div class="a" style="top:649.23px;line-height:13px;font-size:10.3px;left:387.9px;">OP-Ausgleich</div>
<div class="a" style="top:649.23px;line-height:13px;font-size:10.3px;left:879.6px;">18.08.2017</div>
<div class="a" style="top:649.23px;line-height:13px;font-size:10.3px;left:946.9px;">test1</div>
<div class="a" style="left:1035.7px;top:650.0px;width:11px;height:11px;border:1px solid #c3c8da;background:linear-gradient(135deg,#e3e6f0,#fff 70%);box-shadow:inset 0 0 0 1px #f1f2f7"></div>
<div class="a" style="top:649.23px;line-height:13px;font-size:10.3px;left:1094.8px;">0</div>
<div class="a grow" style="top:682.10px"></div>
<svg class="a" style="left:7.4px;top:666.2px" width="12" height="16" viewBox="0 0 12 16"><path d="M.8 1.2 L7.6 .2 L9.6 1.4 L10 14.6 L8.4 15.6 L1.4 13.8 Z" fill="#f3f3f3" stroke="#d2d2d2" stroke-width=".5"/><path d="M2 2.6 L7.6 2 L7.7 3.6 L2.1 4.2 Z" fill="#b3dfa8"/><path d="M2 5.20 L8 6.50" stroke="#878787" stroke-width=".95"/><path d="M2 7.25 L8 8.55" stroke="#878787" stroke-width=".95"/><path d="M2 9.30 L8 10.60" stroke="#878787" stroke-width=".95"/><path d="M2 11.35 L8 12.65" stroke="#878787" stroke-width=".95"/><path d="M9.5 1.6 L10 14.8" stroke="#4c4c4c" stroke-width="1.5"/><path d="M8.3 3 L8.7 14.6" stroke="#bdbdbd" stroke-width=".8"/><rect x="8" y="5.2" width="1.3" height="1.5" fill="#38c6d6"/><rect x="6.6" y="6.6" width="1.2" height="1.2" fill="#ec7b7b"/><rect x="1.2" y=".4" width="2" height=".9" fill="#49c9d6"/><rect x=".4" y="13.2" width="1.6" height="1.1" fill="#49c9d6"/></svg>
<div class="a" style="top:667.68px;line-height:13px;font-size:10.3px;right:1056.7px;">20</div>
<div class="a" style="top:667.68px;line-height:13px;font-size:10.3px;left:92.5px;">18.08.2017</div>
<div class="a" style="top:667.68px;line-height:13px;font-size:10.3px;left:159.9px;">18.08.2017</div>
<div class="a" style="top:667.68px;line-height:13px;font-size:10.3px;left:230.4px;">1098</div>
<div class="a" style="top:667.68px;line-height:13px;font-size:10.3px;left:313.7px;">1010</div>
<div class="a" style="top:667.68px;line-height:13px;font-size:10.3px;left:387.9px;">OP-Sachkonto</div>
<div class="a" style="top:667.68px;line-height:13px;font-size:10.3px;left:879.6px;">18.08.2017</div>
<div class="a" style="top:667.68px;line-height:13px;font-size:10.3px;left:946.9px;">test1</div>
<div class="a" style="left:1035.7px;top:668.5px;width:11px;height:11px;border:1px solid #c3c8da;background:linear-gradient(135deg,#e3e6f0,#fff 70%);box-shadow:inset 0 0 0 1px #f1f2f7"></div>
<div class="a" style="top:667.68px;line-height:13px;font-size:10.3px;left:1094.8px;">0</div>
<div class="a grow" style="top:700.60px"></div>
<svg class="a" style="left:7.4px;top:684.7px" width="12" height="16" viewBox="0 0 12 16"><path d="M.8 1.2 L7.6 .2 L9.6 1.4 L10 14.6 L8.4 15.6 L1.4 13.8 Z" fill="#f3f3f3" stroke="#d2d2d2" stroke-width=".5"/><path d="M2 2.6 L7.6 2 L7.7 3.6 L2.1 4.2 Z" fill="#b3dfa8"/><path d="M2 5.20 L8 6.50" stroke="#878787" stroke-width=".95"/><path d="M2 7.25 L8 8.55" stroke="#878787" stroke-width=".95"/><path d="M2 9.30 L8 10.60" stroke="#878787" stroke-width=".95"/><path d="M2 11.35 L8 12.65" stroke="#878787" stroke-width=".95"/><path d="M9.5 1.6 L10 14.8" stroke="#4c4c4c" stroke-width="1.5"/><path d="M8.3 3 L8.7 14.6" stroke="#bdbdbd" stroke-width=".8"/><rect x="8" y="5.2" width="1.3" height="1.5" fill="#38c6d6"/><rect x="6.6" y="6.6" width="1.2" height="1.2" fill="#ec7b7b"/><rect x="1.2" y=".4" width="2" height=".9" fill="#49c9d6"/><rect x=".4" y="13.2" width="1.6" height="1.1" fill="#49c9d6"/></svg>
<div class="a" style="top:686.13px;line-height:13px;font-size:10.3px;right:1056.7px;">19</div>
<div class="a" style="top:686.13px;line-height:13px;font-size:10.3px;left:92.5px;">18.08.2017</div>
<div class="a" style="top:686.13px;line-height:13px;font-size:10.3px;left:159.9px;">18.08.2017</div>
<div class="a" style="top:686.13px;line-height:13px;font-size:10.3px;left:230.4px;">1098</div>
<div class="a" style="top:686.13px;line-height:13px;font-size:10.3px;left:313.7px;">1099</div>
<div class="a" style="top:686.13px;line-height:13px;font-size:10.3px;left:387.9px;">OP-Sachkonto</div>
<div class="a" style="top:686.13px;line-height:13px;font-size:10.3px;left:879.6px;">18.08.2017</div>
<div class="a" style="top:686.13px;line-height:13px;font-size:10.3px;left:946.9px;">test1</div>
<div class="a" style="left:1035.7px;top:687.0px;width:11px;height:11px;border:1px solid #c3c8da;background:linear-gradient(135deg,#e3e6f0,#fff 70%);box-shadow:inset 0 0 0 1px #f1f2f7"></div>
<div class="a" style="top:686.13px;line-height:13px;font-size:10.3px;left:1094.8px;">0</div>
<div class="a gv" style="left:25.0px"></div>
<div class="a gvs" style="left:25.0px;top:590.6px"></div>
<div class="a gv" style="left:87.6px"></div>
<div class="a gvs" style="left:87.6px;top:590.6px"></div>
<div class="a gv" style="left:155.0px"></div>
<div class="a gvs" style="left:155.0px;top:590.6px"></div>
<div class="a gv" style="left:225.5px"></div>
<div class="a gvs" style="left:225.5px;top:590.6px"></div>
<div class="a gv" style="left:308.8px"></div>
<div class="a gvs" style="left:308.8px;top:590.6px"></div>
<div class="a gv" style="left:383.0px"></div>
<div class="a gvs" style="left:383.0px;top:590.6px"></div>
<div class="a gv" style="left:759.5px"></div>
<div class="a gvs" style="left:759.5px;top:590.6px"></div>
<div class="a gv" style="left:874.7px"></div>
<div class="a gvs" style="left:874.7px;top:590.6px"></div>
<div class="a gv" style="left:942.0px"></div>
<div class="a gvs" style="left:942.0px;top:590.6px"></div>
<div class="a gv" style="left:992.0px"></div>
<div class="a gvs" style="left:992.0px;top:590.6px"></div>
<div class="a gv" style="left:1088.8px"></div>
<div class="a gvs" style="left:1088.8px;top:590.6px"></div>
<!-- CONTEXT MENU -->
<div class="a" id="menu"></div><div class="a" id="mstrip"></div>
<div class="a" style="top:223.39px;line-height:13px;font-size:10px;font-family:'DejaVu Sans Condensed','Liberation Sans',sans-serif;color:#000;left:549.2px;">Suchen</div>
<svg class="a" style="left:519.7px;top:221.8px" width="16" height="16" viewBox="0 0 16 16"><circle cx="5" cy="3.6" r="3.4" fill="#1d1d1d"/><circle cx="5.4" cy="5.2" r="2.5" fill="#e8791a"/><path d="M0.5 14 Q0.5 8.5 5 8.5 L8 9.5 L4.5 14.5 Z" fill="#2d55c8"/><path d="M8.5 8.5 L3.6 13.6" stroke="#3c4a66" stroke-width="3" stroke-linecap="round"/><path d="M8.3 8.7 L4 13.2" stroke="#e8942a" stroke-width="1.4" stroke-linecap="round"/><circle cx="11" cy="5.8" r="3.9" fill="#cfeafc" stroke="#3c4a66" stroke-width="1.5"/><circle cx="10.2" cy="4.8" r="1.6" fill="#fff" opacity=".8"/></svg>
<div class="a" style="top:244.59px;line-height:13px;font-size:10px;font-family:'DejaVu Sans Condensed','Liberation Sans',sans-serif;color:#a3a1a0;left:549.2px;">OP Suchen</div>
<svg class="a" style="left:519.7px;top:243px" width="16" height="16" viewBox="0 0 16 16"><circle cx="5" cy="3.6" r="3.4" fill="#c9c7c6"/><circle cx="5.4" cy="5.2" r="2.5" fill="#d6d4d3"/><path d="M0.5 14 Q0.5 8.5 5 8.5 L8 9.5 L4.5 14.5 Z" fill="#cfcdcc"/><path d="M8.5 8.5 L3.6 13.6" stroke="#c4c2c1" stroke-width="3" stroke-linecap="round"/><path d="M8.3 8.7 L4 13.2" stroke="#cfcdcc" stroke-width="1.4" stroke-linecap="round"/><circle cx="11" cy="5.8" r="3.9" fill="#e4e3e3" stroke="#c4c2c1" stroke-width="1.5"/></svg>
<div class="a" style="top:265.79px;line-height:13px;font-size:10px;font-family:'DejaVu Sans Condensed','Liberation Sans',sans-serif;color:#000;left:549.2px;">Explore</div>
<svg class="a" style="left:519.3px;top:264.59999999999997px" width="16" height="16" viewBox="0 0 16 16"><path d="M2.5 0.5 h5 l2 2 v4.3 h-7 Z" fill="#fff" stroke="#222" stroke-width=".8"/><path d="M5 4 h5 l2 2 v4.3 h-7 Z" fill="#fff" stroke="#222" stroke-width=".8"/><path d="M7.5 7.5 h5 l2 2 v4.3 h-7 Z" fill="#fff" stroke="#222" stroke-width=".8"/><path d="M14.7 10 v4.2 h-4.6" fill="none" stroke="#000" stroke-width="1.3"/><path d="M1 3 l2 1.5 l-1.5 1.2 l2.5 1.8 l-1.5 1.2 l2.5 1.8 l-1.4 1.2 l2.4 1.6" fill="none" stroke="#e01818" stroke-width="1.1"/></svg>
<div class="a msep" style="top:285.35px"></div>
<div class="a" style="top:292.89px;line-height:13px;font-size:10px;font-family:'DejaVu Sans Condensed','Liberation Sans',sans-serif;color:#000;left:549.2px;">Duplizieren</div>
<svg class="a" style="left:520px;top:291.0px" width="16" height="16" viewBox="0 0 16 16"><path d="M1 .5 H7 L9.5 3 V11.5 H1 Z" fill="#f3f8ff" stroke="#5a86dc" stroke-width="1"/><path d="M5.5 4 H11.5 L14.5 7 V15 H5.5 Z" fill="#fafcff" stroke="#4b7ad6" stroke-width="1"/><path d="M11.3 4 V7.2 H14.5" fill="#cfe0fa" stroke="#4b7ad6" stroke-width=".8"/></svg>
<div class="a" style="top:314.09px;line-height:13px;font-size:10px;font-family:'DejaVu Sans Condensed','Liberation Sans',sans-serif;color:#000;left:549.2px;">Löschen</div>
<svg class="a" style="left:520.3px;top:314.0px" width="14" height="14" viewBox="0 0 14 14"><path d="M1.5 1.5 L12.5 12.5 M12.5 1 L1 12.8" stroke="#8e1b1b" stroke-width="1.5" stroke-linecap="round"/></svg>
<div class="a" style="top:335.29px;line-height:13px;font-size:10px;font-family:'DejaVu Sans Condensed','Liberation Sans',sans-serif;color:#000;left:549.2px;">Als Standardbuchung speichern</div>
<div class="a" style="top:356.59px;line-height:13px;font-size:10px;font-family:'DejaVu Sans Condensed','Liberation Sans',sans-serif;color:#000;left:549.2px;">Als Periodische Buchungen speichern</div>
<div class="a msep" style="top:375.85px"></div>
<div class="a" style="top:383.59px;line-height:13px;font-size:10px;font-family:'DejaVu Sans Condensed','Liberation Sans',sans-serif;color:#a3a1a0;left:549.2px;">Mahnadresse</div>
<svg class="a" style="left:520px;top:385px" width="15" height="10" viewBox="0 0 15 10"><rect x="0" y="0" width="15" height="10" fill="#f7f6f6"/></svg>
<div class="a" style="top:404.79px;line-height:13px;font-size:10px;font-family:'DejaVu Sans Condensed','Liberation Sans',sans-serif;color:#000;left:549.2px;">Buchungsstatus ändern</div>
<svg class="a" style="left:521px;top:405.7px" width="15" height="12" viewBox="0 0 15 12"><rect x="0" y="0" width="11.5" height="8.5" fill="#a5d6a3"/><rect x="2.2" y="2" width="12.3" height="9.5" fill="#3f9140" stroke="#7cc07a" stroke-width=".8"/></svg>
<div class="a" style="top:425.99px;line-height:13px;font-size:10px;font-family:'DejaVu Sans Condensed','Liberation Sans',sans-serif;color:#000;left:549.2px;">Originalbeleg zuordnen</div>
<svg class="a" style="left:519.8px;top:425.09999999999997px" width="16" height="15" viewBox="0 0 16 15"><rect x="4.5" y=".5" width="10" height="8.5" fill="#fbd28c" stroke="#e8861a" stroke-width="1"/><path d="M7 7 a4 4 0 0 1 4 -4 M9 7.2 a2.2 2.2 0 0 1 2.2 -2.2" fill="none" stroke="#e8861a" stroke-width="1"/><path d="M.5 6 h4.5 l1 1.3 h6 v6.8 h-11.5 Z" fill="#fcd96a" stroke="#eea822" stroke-width="1"/><path d="M.5 9 h11.5" stroke="#fdeaa0" stroke-width="1.2"/></svg>
<div class="a" style="top:447.19px;line-height:13px;font-size:10px;font-family:'DejaVu Sans Condensed','Liberation Sans',sans-serif;color:#000;left:549.2px;">Originalbeleg entfernen</div>
<svg class="a" style="left:520.6px;top:446.6px" width="14" height="14" viewBox="0 0 14 14"><path d="M11.2 9.6 A4.6 4.6 0 1 1 9.4 3.2" fill="none" stroke="#46a84a" stroke-width="2.4"/><path d="M11.8 5.2 L13.6 10 L8.4 9.8 Z" fill="#2f8a36"/><path d="M5.2 12.4 L9.2 10.6 L9.6 14 Z" fill="#46a84a"/><circle cx="7" cy="7" r="1.5" fill="#46a84a" opacity=".7"/></svg>
<div class="a" style="top:468.39px;line-height:13px;font-size:10px;font-family:'DejaVu Sans Condensed','Liberation Sans',sans-serif;color:#000;left:549.2px;">Originalbeleg anzeigen (F3)</div>
<svg class="a" style="left:521px;top:467.40000000000003px" width="13" height="15" viewBox="0 0 13 15"><path d="M2.5 1 H10.5 L11.5 6 Q9 9 6.5 9 Q4 9 1.5 6 Z" fill="#3ea5f2" stroke="#2d7fe0" stroke-width=".8"/><path d="M4 2 h4.5 l.6 3 q-1.4 1.6 -2.8 1.6 q-1.4 0 -2.8 -1.6 Z" fill="#8fd4fb"/><path d="M5 8.5 h3 l2.8 4.2 q-4 3 -8.6 0 Z" fill="#2c3f9b"/><ellipse cx="6.5" cy="13" rx="5" ry="1.8" fill="#d8dbe4" stroke="#8d93b0" stroke-width=".7"/><ellipse cx="6.5" cy="12.6" rx="2.2" ry="1" fill="#3245a5"/></svg>
<div class="a" style="top:489.59px;line-height:13px;font-size:10px;font-family:'DejaVu Sans Condensed','Liberation Sans',sans-serif;color:#a3a1a0;left:549.2px;">Zahllauf Gegenleistung anzeigen</div>
<svg class="a" style="left:520px;top:488.5px" width="15" height="15" viewBox="0 0 15 15"><circle cx="7.5" cy="7" r="5" fill="#f8f7f7" stroke="#e7e5e4" stroke-width="1.4"/><path d="M1 2 l3 2 M14 2 l-3 2 M1.5 14 l3 -2.5 M13.5 14 l-3 -2.5" stroke="#ebe9e8" stroke-width="1.6"/></svg>
<div class="a" style="top:510.79px;line-height:13px;font-size:10px;font-family:'DejaVu Sans Condensed','Liberation Sans',sans-serif;color:#000;left:549.2px;">Rechnung zuordnen</div>
<svg class="a" style="left:520.7px;top:510.20000000000005px" width="14" height="14" viewBox="0 0 14 14"><defs><linearGradient id="rg" x1="0" y1="0" x2="0" y2="1"><stop offset="0" stop-color="#4fb84a"/><stop offset="1" stop-color="#1f8a1f"/></linearGradient></defs><rect x=".5" y=".5" width="13" height="13" rx="1.2" fill="url(#rg)" stroke="#1c7a1c" stroke-width="1"/><path d="M2.8 7 H10 M6.8 3.4 L10.6 7 L6.8 10.6" fill="none" stroke="#fff" stroke-width="2"/></svg>
<div class="a" style="top:532.09px;line-height:13px;font-size:10px;font-family:'DejaVu Sans Condensed','Liberation Sans',sans-serif;color:#a3a1a0;left:549.2px;">Zur Rückzahlung vormerken</div>
<svg class="a" style="left:520.7px;top:531.5px" width="13.5" height="13.5" viewBox="0 0 14 14"><circle cx="7" cy="7" r="6" fill="#d5d3d2" stroke="#c6c4c3" stroke-width="1"/><path d="M7 3.8 V10.2 M3.8 7 H10.2" stroke="#eceaea" stroke-width="2"/></svg>
<div class="a msep" style="top:551.75px"></div>
<div class="a" style="top:559.09px;line-height:13px;font-size:10px;font-family:'DejaVu Sans Condensed','Liberation Sans',sans-serif;color:#a3a1a0;left:552.3px;">In Stapel einfügen</div>
<svg class="a" style="left:520.7px;top:558.5px" width="13.5" height="13.5" viewBox="0 0 14 14"><circle cx="7" cy="7" r="6" fill="#d5d3d2" stroke="#c6c4c3" stroke-width="1"/><path d="M7 3.8 V10.2 M3.8 7 H10.2" stroke="#eceaea" stroke-width="2"/></svg>
<div class="a" style="top:580.39px;line-height:13px;font-size:10px;font-family:'DejaVu Sans Condensed','Liberation Sans',sans-serif;color:#a3a1a0;left:549.2px;">Stapel löschen</div>
<svg class="a" style="left:520.5px;top:579.8px" width="15" height="14" viewBox="0 0 15 14"><rect x="1" y="1" width="10" height="8" fill="#f1f0ef" stroke="#dddbda" stroke-width="1"/><rect x="4" y="6" width="10" height="7" fill="#eeeceb" stroke="#dad8d7" stroke-width="1"/></svg>
<div class="a" style="top:601.79px;line-height:13px;font-size:10px;font-family:'DejaVu Sans Condensed','Liberation Sans',sans-serif;color:#000;left:549.2px;">Sachkonto abstimmen</div>
<svg class="a" style="left:520.6px;top:601.2px" width="14" height="14" viewBox="0 0 14 14"><rect x=".6" y="0.6" width="3.6" height="3.4" fill="#fff" stroke="#111" stroke-width="1.1"/><path d="M5.5 2.3 h7.5" stroke="#444" stroke-width="1" stroke-dasharray="1 1"/><rect x=".6" y="5.199999999999999" width="3.6" height="3.4" fill="#fff" stroke="#111" stroke-width="1.1"/><path d="M5.5 6.8999999999999995 h7.5" stroke="#444" stroke-width="1" stroke-dasharray="1 1"/><rect x=".6" y="9.799999999999999" width="3.6" height="3.4" fill="#fff" stroke="#111" stroke-width="1.1"/><path d="M5.5 11.499999999999998 h7.5" stroke="#444" stroke-width="1" stroke-dasharray="1 1"/></svg>
<div class="a msep" style="top:621.35px"></div>
<div class="a" style="top:628.59px;line-height:13px;font-size:10px;font-family:'DejaVu Sans Condensed','Liberation Sans',sans-serif;color:#000;left:549.2px;">Stammdaten Soll Konto</div>
<div class="a" style="top:649.89px;line-height:13px;font-size:10px;font-family:'DejaVu Sans Condensed','Liberation Sans',sans-serif;color:#000;left:549.2px;">Stammdaten Haben Konto</div>
<div class="a" style="top:670.89px;line-height:13px;font-size:10px;font-family:'DejaVu Sans Condensed','Liberation Sans',sans-serif;color:#000;left:549.2px;">Ablaufsteuerung</div>
<svg class="a" style="left:520px;top:669.8px" width="14" height="14" viewBox="0 0 14 14"><path d="M7 2 V5 M2.5 7.5 V5 H11.5 V7.5 M7 5 V7.5 M4.5 11.5 V10 H9.5 V11.5 M7 8.5 V10" fill="none" stroke="#111" stroke-width="1.1"/><rect x="4.8" y="0" width="4.4" height="2.6" fill="#111"/><rect x="5.8" y=".7" width="2.4" height="1.2" fill="#e61ab0"/><rect x="0.5" y="6.6" width="4" height="2.6" fill="#111"/><rect x="1.5" y="7.3" width="2" height="1.2" fill="#e61ab0"/><rect x="5" y="6.6" width="4" height="2.6" fill="#111"/><rect x="6" y="7.3" width="2" height="1.2" fill="#e61ab0"/><rect x="9.5" y="6.6" width="4" height="2.6" fill="#111"/><rect x="10.5" y="7.3" width="2" height="1.2" fill="#e61ab0"/><rect x="2.5" y="11.2" width="4" height="2.6" fill="#111"/><rect x="3.5" y="11.9" width="2" height="1.2" fill="#e61ab0"/><rect x="7.5" y="11.2" width="4" height="2.6" fill="#111"/><rect x="8.5" y="11.9" width="2" height="1.2" fill="#e61ab0"/></svg>
<div class="a msep" style="top:690.65px"></div>
<div class="a" style="left:511.3px;top:590.8px;width:165.5px;height:35.6px;border:3.8px solid #e61f2d;border-radius:2.5px"></div>
<div class="a" style="left:0px;top:692px;width:1139px;height:2px;background:#fff"></div>
</div>
</body>
</html>
